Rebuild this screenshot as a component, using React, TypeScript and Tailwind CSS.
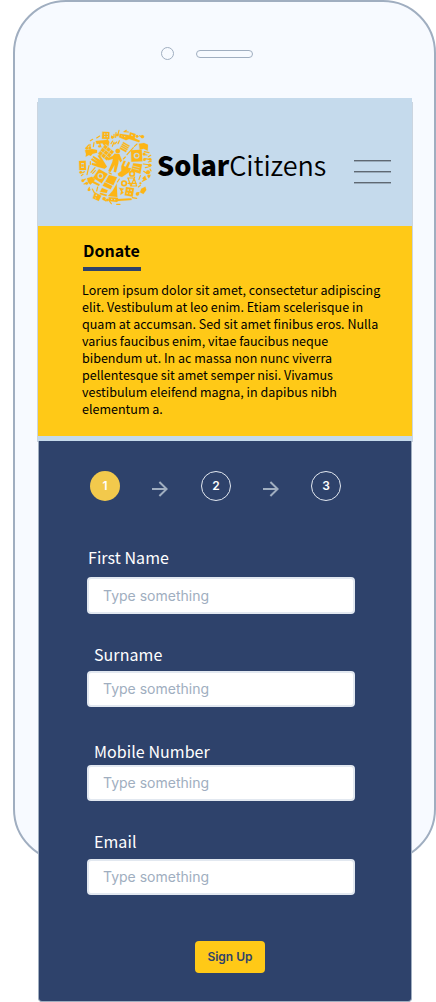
import type { ReactNode } from "react";

const SANS = "font-['Noto_Sans_CJK_JP','Noto_Sans',sans-serif]";
const INTER = "font-['Inter',sans-serif]";

function SolarLogo() {
  return (
    <svg viewBox="24 27 228 228" className="size-[76px] shrink-0" fill="#fdb515" stroke="#fdb515" strokeWidth="0.5" strokeLinecap="round" strokeLinejoin="round" aria-hidden="true">
      {/* figure */}
      <circle cx="143" cy="93" r="7" />
      <path d="M134 101 L148 102 L156 122 L151 127 L146 118 L145 130 L138 157 L131 155 L134 134 L121 157 L115 153 L127 126 L129 116 L115 121 L113 115 L128 108Z" />
      {/* roof solar panel */}
      <g transform="rotate(38 108 98)">
        <rect x="91" y="81" width="10" height="10" /><rect x="103" y="81" width="10" height="10" /><rect x="115" y="81" width="10" height="10" />
        <rect x="91" y="93" width="10" height="10" /><rect x="103" y="93" width="10" height="10" /><rect x="115" y="93" width="10" height="10" />
        <rect x="91" y="105" width="10" height="10" /><rect x="103" y="105" width="10" height="10" /><rect x="115" y="105" width="10" height="10" />
      </g>
      {/* hand */}
      <path d="M70 108 L92 121 L83 107 L89 105 L100 122 L111 140 L104 146 L84 141 L65 134 L66 129 L80 131 L63 119 L66 115 L84 125 L68 112Z" />
      {/* plug */}
      <path d="M161 122 L167 123 L161 138 L167 140 L175 125 L180 128 L174 143 L183 145 L178 156 L166 164 L156 171 L146 168 L143 161 L154 153 L154 139Z" />
      {/* washing machines */}
      <path fillRule="evenodd" d="M183 91 L215 89 L217 124 L184 125Z M199 98 a9 9 0 1 0 1 18 a9 9 0 1 0 -1 -18Z" />
      <circle cx="200" cy="107" r="5" />
      <path fillRule="evenodd" d="M87 147 L113 162 L95 190 L69 173Z M91 159 a9 9 0 1 0 .1 18 a9 9 0 1 0 -.1 -18Z" />
      <circle cx="91" cy="168" r="5" />
      {/* wall panels */}
      <path d="M117 165 L141 172 L130 196 L106 185Z M104 187 L127 198 L122 208 L98 197Z" />
      <path d="M190 130 L216 133 L211 161 L183 152Z" />
      <path d="M189 138 L208 143 M188 145 L206 150" fill="none" stroke="#c5daec" strokeWidth="2" />
      <g transform="rotate(30 164 81)">
        <rect x="153" y="70" width="22" height="4" /><rect x="153" y="76" width="22" height="4" /><rect x="153" y="82" width="22" height="4" /><rect x="153" y="88" width="22" height="5" />
      </g>
      <path fillRule="evenodd" d="M168 201 L192 205 L188 230 L164 226Z M173 207 L172 212 L176 213 L177 208Z M182 208 L181 213 L185 214 L186 209Z M170 217 L169 221 L173 222 L174 218Z M179 219 L178 223 L182 224 L183 220Z" />
      <path fillRule="evenodd" d="M97 35 L118 36 L118 57 L96 56Z M102 40 V44 H106 V40Z M110 40 V44 H114 V40Z M102 48 V52 H106 V48Z M110 48 V52 H114 V48Z" />
      <path fillRule="evenodd" d="M74 217 L94 227 L86 243 L68 235Z M78 223 L76 227 L80 229 L82 225Z M75 232 L74 234 L78 236 L79 234Z" />
      <path fillRule="evenodd" d="M180 37 L197 42 L193 58 L176 52Z M184 43 L183 47 L188 49 L189 45Z" />
      {/* bicycle */}
      <g fill="none" strokeWidth="5">
        <circle cx="186" cy="161" r="7" /><circle cx="162" cy="190" r="7" />
        <path d="M173 174 H192 L200 198 H182 L174 174 M183 198 L194 171 M174 190 H199" strokeWidth="3.5" />
      </g>
      {/* sail, house and kettles */}
      <path d="M140 191 L142 231 L114 228 Q129 214 140 191Z M147 203 L162 206 L156 212 L161 218 L151 225 L153 214Z" />
      <path d="M96 204 L113 211 L110 219 L90 215Z M91 218 L111 224 L109 229 L89 223Z" />
      <path d="M45 91 L66 87 L81 90 L81 98 L68 101 L62 108 L57 105 L47 110 L48 102Z" />
      <path d="M51 175 L66 170 L75 179 L71 184 L89 193 L87 198 L67 188 L61 194 L54 187Z" />
      <path d="M77 63 L108 60 L113 57 L118 66 L115 79 L107 72 L103 77 L97 70 L80 72Z" />
      <path fillRule="evenodd" d="M149 41 L174 45 L210 62 L207 67 L177 57 L168 61 L147 52Z M154 46 V49 L157 50 V47Z M162 48 V51 L166 52 V49Z" />
      <path fillRule="evenodd" d="M116 232 L143 233 L145 237 L184 235 L185 240 L145 243 L140 246 L116 243Z M123 236 V240 H127 V236Z M132 237 V241 H136 V237Z" />
      <path d="M207 71 L222 69 L234 74 L233 92 L221 86 L209 89Z M214 206 L226 200 L229 210 L220 222 L210 217Z" />
      <path fillRule="evenodd" d="M27 123 L47 122 L48 150 L28 150Z M33 129 V144 H42 V129Z" />
      <rect x="34" y="133" width="7" height="7" />
      {/* tools and notes round the rim */}
      <g fill="none" strokeWidth="3.5">
        <path d="M190 83 L171 104 M166 111 L160 117 M201 72 L193 79 M132 43 V52 M138 38 L137 52 M148 62 L144 71 M88 68 L93 81 M60 73 V82 M72 68 L70 80 M89 48 L80 54 M50 82 L56 75" />
        <path d="M57 137 L51 164 M61 125 L61 133 M38 158 L43 155 M34 167 L39 163 M38 183 L46 177 M42 192 L48 190 M58 202 L55 211 M67 207 L73 218 M83 201 L80 213" />
        <path d="M223 95 L237 98 M220 104 L231 105 M235 110 L242 106 M224 116 L239 118 M235 126 L244 123 M220 132 L242 135 M226 143 L235 141 M240 147 L243 153 M221 154 L230 160 M225 169 L222 176 M240 165 L236 173 M217 184 L229 178 M211 196 L205 201" />
        <path d="M201 220 L207 218 M209 47 L216 51 M169 31 L162 35 L175 36 M147 31 L144 43 M125 48 L127 53 M100 237 L108 243 M119 244 L124 251 M140 253 H150 M187 233 L200 235" />
        <path d="M123 71 L128 63 M132 67 L127 79 M134 72 L140 66 M75 143 L63 157 M68 160 L76 152 M148 177 L142 186 M211 167 L207 178 M61 62 L68 58 M117 158 L124 162" />
      </g>
      <g>
        <circle cx="59" cy="84" r="4" /><circle cx="50" cy="85" r="4" /><circle cx="88" cy="79" r="3.5" /><circle cx="127" cy="52" r="4" /><circle cx="142" cy="45" r="4" />
        <circle cx="217" cy="50" r="5" /><circle cx="201" cy="49" r="4" /><circle cx="102" cy="236" r="5" /><circle cx="112" cy="240" r="4" /><circle cx="202" cy="222" r="5" />
        <circle cx="234" cy="157" r="6" /><circle cx="239" cy="136" r="5" /><circle cx="223" cy="175" r="5" /><circle cx="236" cy="168" r="4" /><circle cx="38" cy="182" r="4" /><circle cx="50" cy="190" r="4" />
        <circle cx="223" cy="119" r="4" /><circle cx="240" cy="118" r="4" /><circle cx="222" cy="102" r="4" /><circle cx="32" cy="157" r="4" /><circle cx="57" cy="209" r="4" /><circle cx="211" cy="190" r="3" />
      </g>
    </svg>
  );
}

function Step({ n, active }: { n: number; active?: boolean }) {
  return (
    <div className={`flex size-[30px] items-center justify-center rounded-full text-xs font-semibold ${active ? "bg-[#f2c94c] text-white" : "border border-[#e2e8f0] text-white"} ${INTER}`}>
      {n}
    </div>
  );
}

function Arrow() {
  return (
    <svg viewBox="0 0 16 16" className="mt-2.5 size-4" fill="none" stroke="#a0aec0" strokeWidth="2" aria-hidden="true">
      <path d="M0 8H15M7.4 1L14.6 8L7.4 15" />
    </svg>
  );
}

function Field({ label, className, labelClass, inputClass }: { label: ReactNode; className: string; labelClass: string; inputClass: string }) {
  return (
    <label className={`flex flex-col ${className}`}>
      <span className={`h-6 text-[16px] leading-[22px] tracking-[0.06px] whitespace-nowrap text-white ${SANS} ${labelClass}`}>{label}</span>
      <input
        placeholder="Type something"
        className={`w-[268px] rounded border-2 border-[#e2e8f0] bg-white px-3.5 text-sm text-[#2d3748] outline-none placeholder:text-[#a0aec0] ${INTER} ${inputClass}`}
      />
    </label>
  );
}

export default function App() {
  return (
    <div className="grid h-[1002px] w-[436px] overflow-hidden bg-white">
      <div className="col-start-1 row-start-1 ml-[13px] h-[862px] w-[423px] rounded-[53px] border-2 border-[#a0aec0] bg-[#f7faff]">
        <div className="flex items-center pt-[45px] pl-[146px]">
          <div className="size-[13px] rounded-full border border-[#a0aec0]" />
          <div className="ml-[22px] h-2 w-[57px] rounded-[4px] border border-[#a0aec0]" />
        </div>
      </div>

      <main className="col-start-1 row-start-1 mt-[98px] ml-[37px] h-[904px] w-[376px] bg-[linear-gradient(#cbd5e0,#cbd5e0)] bg-[length:100%_340px] bg-[position:0_4px] bg-no-repeat">
        <header className="mx-px flex h-32 bg-[#c5daec] pt-[31px] pl-10">
          <SolarLogo />
          <h1 className={`ml-[3px] mt-[16px] flex h-10 w-[170px] items-center text-[27px] whitespace-nowrap text-black ${SANS}`}>
            <span className="font-black">Solar</span>
            <span className="font-[350] tracking-[-0.1px]">Citizens</span>
          </h1>
          <button aria-label="Menu" className="mt-[31px] ml-[27px] flex h-6 w-[37px] flex-col justify-between">
            <span className="h-0.5 w-full border-t border-[#5f6872] bg-[#9aabba]" />
            <span className="h-0.5 w-full border-t border-[#5f6872] bg-[#9aabba]" />
            <span className="h-0.5 w-full border-t border-[#5f6872] bg-[#9aabba]" />
          </button>
        </header>

        <section className={`mx-px h-[210px] bg-[#ffc917] pt-3 pl-11 text-black ${SANS}`}>
          <h2 className="ml-px h-6 text-[16px] leading-6 font-bold tracking-[0.05px]">Donate</h2>
          <div className="mt-[5px] ml-px h-1 w-[58px] bg-[#2e426b]" />
          <p className="mt-2.5 text-[12.53px] leading-[17px] whitespace-nowrap">
            Lorem ipsum dolor sit amet, consectetur adipiscing<br />
            elit. Vestibulum at leo enim. Etiam scelerisque in<br />
            quam at accumsan. Sed sit amet finibus eros. Nulla<br />
            varius faucibus enim, vitae faucibus neque<br />
            bibendum ut. In ac massa non nunc viverra<br />
            pellentesque sit amet semper nisi. Vivamus<br />
            vestibulum eleifend magna, in dapibus nibh<br />
            elementum a.
          </p>
        </section>
        <div className="mx-px h-[5px] bg-[#c5daec]" />

        <form className="mx-px h-[561px] rounded-b border-x border-b border-[#a0aec0] bg-[#2e426b] pt-[30px] pl-12">
          <div className="ml-[3px] flex">
            <Step n={1} active />
            <span className="w-8" />
            <Arrow />
            <span className="w-[33px]" />
            <Step n={2} />
            <span className="w-8" />
            <Arrow />
            <span className="w-8" />
            <Step n={3} />
          </div>
          <Field label="First Name" className="mt-[45px]" labelClass="ml-px" inputClass="mt-[7px] h-[37px]" />
          <Field label="Surname" className="mt-[29px]" labelClass="ml-[7px]" inputClass="mt-1 h-9 pb-px" />
          <Field label="Mobile Number" className="mt-[33px]" labelClass="ml-[7px]" inputClass="mt-px h-9 pb-px" />
          <Field label="Email" className="mt-[29px]" labelClass="ml-[7px]" inputClass="mt-[5px] h-9 pb-px" />
          <button type="button" className={`mt-[46px] ml-[108px] flex h-8 w-[70px] items-center justify-center rounded bg-[#ffc917] text-xs font-semibold text-[#2e426b] ${INTER}`}>
            Sign Up
          </button>
        </form>
      </main>
    </div>
  );
}
